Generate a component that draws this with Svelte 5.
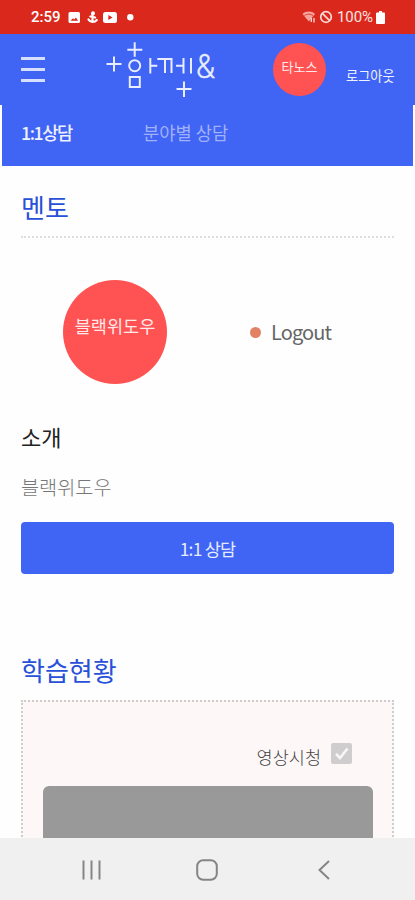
<script lang="ts">
  const tabs = [
    { label: "1:1상담", active: true },
    { label: "분야별 상담", active: false },
  ];

  const userName = "타노스";
  const mentor = { name: "블랙위도우", status: "Logout", intro: "블랙위도우" };
</script>

<div class="screen">
  <div class="status-bar">
    <span class="clock">2:59</span>
    <svg class="status-left" width="68" height="14" viewBox="0 0 68 14">
      <path
        fill="#fff"
        fill-rule="evenodd"
        d="M2 2h8.500a1.500 1.500 0 0 1 1.500 1.500v8a1.500 1.500 0 0 1-1.500 1.500H2A1.500 1.500 0 0 1 .5 11.500v-8A1.500 1.500 0 0 1 2 2zM2.500 10.800h7.600L7.900 7.600 6.200 9.500 5 8.200z"
      />
      <circle cx="25" cy="3.200" r="2" fill="#fff" />
      <path d="M24.500 4v7.500M20.500 9.500c1.500 3 6 3.300 8.300.5M22.300 6.500l4.800 1" stroke="#fff" stroke-width="2.200" stroke-linecap="round" fill="none" />
      <rect x="35" y="2" width="14" height="11" rx="2.500" fill="#fff" />
      <path d="M40.300 5v5l4.300-2.500z" fill="#da291c" />
      <circle cx="62.300" cy="7.200" r="3.200" fill="#fff" />
    </svg>
    <svg class="status-right" width="32" height="14" viewBox="0 0 32 14">
      <path d="M.5 4C4 .8 9.500.8 13 4L6.800 11.500z" fill="#f5a39c" />
      <path d="M2.500 5.500c2.500-1.800 6-1.800 8.500 0" stroke="#da291c" stroke-width=".8" fill="none" />
      <path d="M9.300 8v4M12 8v4.500" stroke="#fbdcd8" stroke-width="1.300" />
      <circle cx="24" cy="7" r="5.300" stroke="#fbdcd8" stroke-width="1.700" fill="none" />
      <path d="M20.300 3.300l7.400 7.400" stroke="#fbdcd8" stroke-width="1.700" />
    </svg>
    <span class="percent">100%</span>
    <svg class="battery" width="9" height="13" viewBox="0 0 9 13">
      <path d="M3 0h3v1.500h2a1 1 0 0 1 1 1V12a1 1 0 0 1-1 1H1a1 1 0 0 1-1-1V2.500a1 1 0 0 1 1-1h2z" fill="#fff" />
    </svg>
  </div>

  <header>
    <button class="menu" aria-label="menu">
      <span></span>
      <span></span>
      <span></span>
    </button>
    <svg class="logo" width="112" height="60" viewBox="105 39 112 60">
      <g fill="none" stroke="#e8edff" stroke-width="2">
        <path d="M106.500 63h15M114 55.500v15" />
        <path d="M127.300 48.700h15M134.700 41.300v14.500" />
        <circle cx="134.700" cy="64.700" r="5.500" />
        <rect x="129.800" y="76" width="10" height="10" />
        <path d="M150.300 57v15.500M150.300 64.700h7" />
        <path d="M157.300 58h14.200V72M165 58v14" />
        <path d="M176 64.700h7.500M183.500 57v15.500M191 57v15.500" />
        <path d="M176.500 88h15M184 80.500v15.500" />
      </g>
      <text x="196" y="76.700" textLength="19" lengthAdjust="spacingAndGlyphs">&amp;</text>
    </svg>
    <div class="avatar small">{userName}</div>
    <a class="logout" href="#logout">로그아웃</a>
  </header>

  <nav>
    {#each tabs as tab}
      <a href="#tab" class:active={tab.active}>{tab.label}</a>
    {/each}
  </nav>

  <main>
    <section class="mentor">
      <h2>멘토</h2>
      <div class="profile">
        <div class="avatar large">{mentor.name}</div>
        <div class="state"><i></i>{mentor.status}</div>
      </div>
      <h3>소개</h3>
      <p>{mentor.intro}</p>
      <button class="consult">1:1 상담</button>
    </section>

    <section class="progress">
      <h2>학습현황</h2>
      <div class="board">
        <div class="check">
          <span>영상시청</span>
          <svg width="21" height="21" viewBox="0 0 21 21">
            <rect width="21" height="21" rx="2" fill="#cfcdcd" />
            <path d="M5 10.800l4 4.200 7.500-9.500" fill="none" stroke="#f8f6f6" stroke-width="2.600" />
          </svg>
        </div>
        <div class="video"></div>
      </div>
    </section>
  </main>

  <footer>
    <svg width="20" height="20" viewBox="0 0 20 20">
      <path d="M2.500.5v19M10.500.5v19M18.500.5v19" />
    </svg>
    <svg width="22" height="22" viewBox="0 0 22 22">
      <rect x="1.200" y="1.200" width="19.600" height="19.600" rx="6" />
    </svg>
    <svg width="12" height="20" viewBox="0 0 12 20">
      <path d="M11 1L1.500 10l9.500 9" />
    </svg>
  </footer>
</div>

<style>
  :global(body) {
    background: #fff;
  }

  .screen {
    display: flex;
    flex-direction: column;
    width: 415px;
    height: 900px;
    overflow: hidden;
    font-family: "Noto Sans CJK KR", sans-serif;
    background: #fefefe;
  }

  a {
    color: inherit;
    text-decoration: none;
  }

  button {
    padding: 0;
    border: none;
    font: inherit;
  }

  .status-bar {
    display: flex;
    flex: none;
    align-items: center;
    box-sizing: border-box;
    height: 34px;
    padding-left: 31px;
    color: #fff;
    background: #da291c;
    font-family: Roboto, sans-serif;
    font-size: 15px;
  }

  .clock {
    width: 37px;
    font-weight: 500;
  }

  .status-right {
    margin-left: 166px;
  }

  .percent {
    width: 37px;
    margin-left: 3px;
    color: #fbe3e0;
    letter-spacing: -0.1px;
  }

  .battery {
    margin-left: 2px;
  }

  header {
    display: flex;
    flex: none;
    align-items: center;
    height: 71px;
    padding-left: 21px;
    color: #f0f3ff;
    background: #4064f4;
  }

  .menu {
    display: flex;
    flex-direction: column;
    gap: 8px;
    width: 24px;
    background: none;
  }

  .menu span {
    height: 3px;
    background: #d7dfff;
  }

  .logo {
    margin-left: 60px;
  }

  .logo text {
    fill: #e8edff;
    stroke: #e8edff;
    stroke-width: 0.4;
    font-family: Roboto, sans-serif;
    font-size: 34px;
    font-weight: 300;
  }

  .avatar {
    display: flex;
    justify-content: center;
    box-sizing: border-box;
    border-radius: 50%;
    color: #ffe9e9;
    background: #ff5252;
    white-space: nowrap;
  }

  .small {
    width: 53px;
    height: 53px;
    margin-left: 56px;
    padding-top: 14px;
    font-size: 13px;
    line-height: 19px;
  }

  .logout {
    margin: 12px 0 0 20px;
    font-size: 13.200px;
    line-height: 20px;
  }

  nav {
    display: flex;
    flex: none;
    gap: 71px;
    height: 61px;
    margin: 0 2px;
    padding-left: 19px;
    box-sizing: border-box;
    color: #a0b2fa;
    background: #4064f4;
    font-size: 17.700px;
    line-height: 55px;
  }

  nav .active {
    color: #eef1ff;
    font-weight: 500;
    letter-spacing: -1.4px;
  }

  main {
    flex: 1;
    min-height: 0;
    padding: 0 21px;
    overflow: hidden;
  }

  h2 {
    margin: 0;
    color: #2850d8;
    font-size: 26px;
    font-weight: 400;
    line-height: 38px;
  }

  .mentor h2 {
    padding: 22px 0 10px;
    border-bottom: 2px dotted #dedede;
  }

  .profile {
    display: flex;
    align-items: center;
    padding: 42px 0 0 42px;
  }

  .large {
    width: 104px;
    height: 104px;
    padding-top: 33px;
    font-size: 17.500px;
    line-height: 25px;
  }

  .state {
    display: flex;
    align-items: center;
    margin-left: 83px;
    color: #666;
    font-size: 20px;
    letter-spacing: -0.9px;
    line-height: 30px;
  }

  .state i {
    width: 11px;
    height: 11px;
    margin-right: 10px;
    border-radius: 50%;
    background: #e28265;
  }

  h3 {
    margin: 36px 0 0;
    color: #222;
    font-size: 22px;
    font-weight: 400;
    line-height: 32px;
  }

  p {
    margin: 20px 0 0;
    color: #777;
    font-size: 19.700px;
    font-weight: 300;
    line-height: 30px;
  }

  .consult {
    display: block;
    width: 373px;
    height: 52px;
    margin-top: 20px;
    border-radius: 4px;
    color: #e6ecff;
    background: #4064f4;
    font-size: 17.500px;
    letter-spacing: -0.8px;
  }

  .progress {
    padding-top: 77px;
  }

  .board {
    height: 300px;
    margin-top: 11px;
    padding: 41px 19px 0 20px;
    border: 2px dotted #cfcccc;
    background: #fdf8f7;
  }

  .check {
    display: flex;
    align-items: center;
    justify-content: flex-end;
    gap: 10px;
    height: 21px;
    margin: 0 21px 22px 0;
    color: #444;
    font-size: 17.500px;
    font-weight: 300;
  }

  .check span {
    margin-top: 5px;
  }

  .video {
    height: 200px;
    border-radius: 6px;
    background: #999;
  }

  footer {
    display: flex;
    flex: none;
    align-items: center;
    height: 62px;
    padding-left: 81px;
    background: #f0f0f0;
  }

  footer svg {
    flex: none;
    margin: 2px 95px 0 0;
    fill: none;
    stroke: #858585;
    stroke-width: 2;
  }

  footer svg:nth-child(2) {
    margin-right: 100px;
  }
</style>
